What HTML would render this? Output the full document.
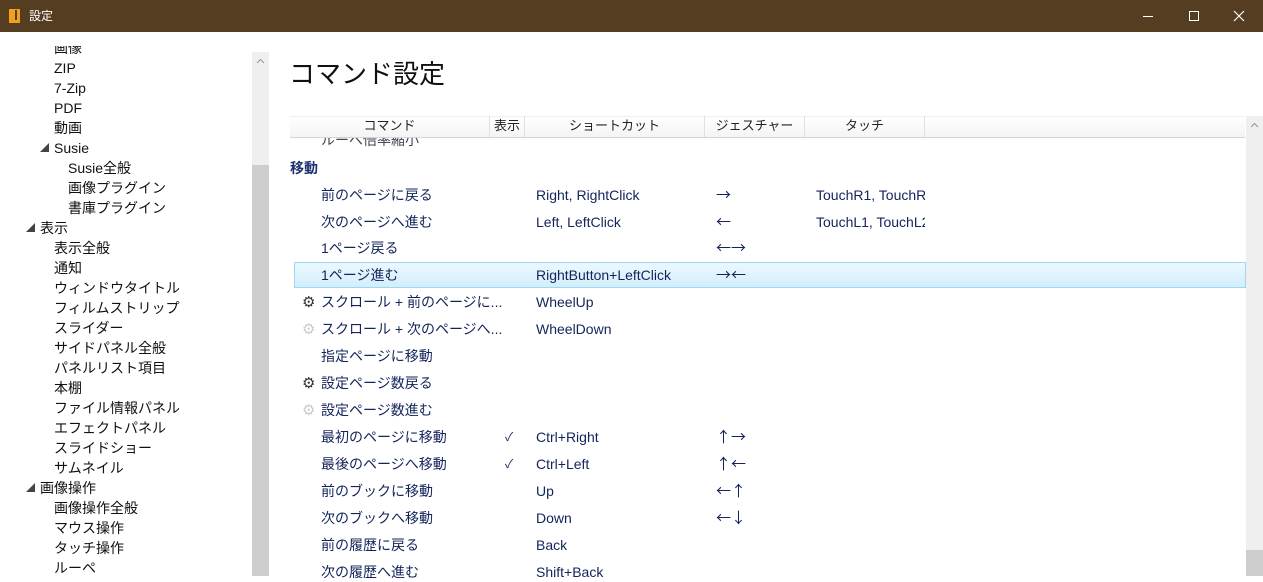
<!DOCTYPE html>
<html><head><meta charset="utf-8"><style>
*{margin:0;padding:0;box-sizing:border-box}
body{width:1263px;height:576px;overflow:hidden;background:#fff;position:relative;font-family:"Liberation Sans","Noto Sans CJK JP",sans-serif;}
.a{position:absolute;white-space:nowrap}
.tb{position:absolute;left:0;top:0;width:1263px;height:32px;background:#553d22;color:#fff}
.t{font-size:14px;line-height:20px;color:#111}
.r{font-size:14px;line-height:20px;color:#13245a}
.ar{font-family:"Noto Sans CJK JP",sans-serif;font-size:15px;line-height:20px;color:#13245a;position:absolute;white-space:nowrap;letter-spacing:0}
.g{font-family:"DejaVu Sans",sans-serif;font-size:15px;line-height:20px;position:absolute}
.h{font-size:13px;line-height:20px;color:#222;text-align:center;position:absolute;top:116px;height:21px;border-right:1px solid #e0e0e0}
</style></head><body>
<div class="tb">
<div class="a" style="left:9px;top:9px;width:11px;height:14px;background:#f0a01c"></div>
<div class="a" style="left:15px;top:10px;width:2px;height:10px;background:#553d22"></div>
<div class="a" style="left:29px;top:7px;font-size:12px;line-height:18px">設定</div>
<div class="a" style="left:1143px;top:16px;width:10px;height:1px;background:#fff"></div>
<div class="a" style="left:1189px;top:11px;width:10px;height:10px;border:1px solid #fff"></div>
<svg class="a" style="left:1233px;top:10px" width="12" height="12"><path d="M1 1L11 11M11 1L1 11" stroke="#fff" stroke-width="1.2"/></svg>
</div>
<!-- left tree -->
<div class="a t" style="left:54px;top:38px;clip-path:inset(8px 0 0 0)">画像</div>
<div class="a t" style="left:54px;top:58px">ZIP</div>
<div class="a t" style="left:54px;top:78px">7-Zip</div>
<div class="a t" style="left:54px;top:98px">PDF</div>
<div class="a t" style="left:54px;top:118px">動画</div>
<div class="a t" style="left:40px;top:138px;font-size:9px;color:#444">◢</div><div class="a t" style="left:54px;top:138px">Susie</div>
<div class="a t" style="left:68px;top:158px">Susie全般</div>
<div class="a t" style="left:68px;top:178px">画像プラグイン</div>
<div class="a t" style="left:68px;top:198px">書庫プラグイン</div>
<div class="a t" style="left:26px;top:218px;font-size:9px;color:#444">◢</div><div class="a t" style="left:40px;top:218px">表示</div>
<div class="a t" style="left:54px;top:238px">表示全般</div>
<div class="a t" style="left:54px;top:258px">通知</div>
<div class="a t" style="left:54px;top:278px">ウィンドウタイトル</div>
<div class="a t" style="left:54px;top:298px">フィルムストリップ</div>
<div class="a t" style="left:54px;top:318px">スライダー</div>
<div class="a t" style="left:54px;top:338px">サイドパネル全般</div>
<div class="a t" style="left:54px;top:358px">パネルリスト項目</div>
<div class="a t" style="left:54px;top:378px">本棚</div>
<div class="a t" style="left:54px;top:398px">ファイル情報パネル</div>
<div class="a t" style="left:54px;top:418px">エフェクトパネル</div>
<div class="a t" style="left:54px;top:438px">スライドショー</div>
<div class="a t" style="left:54px;top:458px">サムネイル</div>
<div class="a t" style="left:26px;top:478px;font-size:9px;color:#444">◢</div><div class="a t" style="left:40px;top:478px">画像操作</div>
<div class="a t" style="left:54px;top:498px">画像操作全般</div>
<div class="a t" style="left:54px;top:518px">マウス操作</div>
<div class="a t" style="left:54px;top:538px">タッチ操作</div>
<div class="a t" style="left:54px;top:558px">ルーペ</div>
<!-- left scrollbar -->
<div class="a" style="left:252px;top:52px;width:17px;height:524px;background:#efefef"></div>
<div class="a" style="left:252px;top:165px;width:17px;height:411px;background:#cdcdcd"></div>
<svg class="a" style="left:256px;top:58px" width="9" height="6"><path d="M1 5L4.5 1.5L8 5" stroke="#999" fill="none"/></svg>
<!-- title -->
<div class="a" style="left:289px;top:56px;font-size:26px;line-height:36px;color:#111">コマンド設定</div>
<!-- header -->
<div class="a" style="left:290px;top:116px;width:955px;height:22px;background:linear-gradient(#fff,#f3f4f4);border-top:1px solid #f0f0f0;border-bottom:1px solid #d5d5d5"></div>
<div class="h" style="left:290px;width:200px">コマンド</div>
<div class="h" style="left:490px;width:35px">表示</div>
<div class="h" style="left:525px;width:180px">ショートカット</div>
<div class="h" style="left:705px;width:100px">ジェスチャー</div>
<div class="h" style="left:805px;width:120px">タッチ</div>
<div class="a r" style="left:321px;top:130px;clip-path:inset(8px 0 0 0);color:#445">ルーペ倍率縮小</div>
<!-- right scrollbar -->
<div class="a" style="left:1246px;top:116px;width:17px;height:460px;background:#efefef"></div>
<div class="a" style="left:1246px;top:550px;width:17px;height:26px;background:#cdcdcd"></div>
<svg class="a" style="left:1250px;top:122px" width="9" height="6"><path d="M1 5L4.5 1.5L8 5" stroke="#999" fill="none"/></svg>
<!-- rows -->
<div class="a" style="left:290px;top:158px;font-size:14px;line-height:20px;font-weight:bold;color:#1c2f6e">移動</div>
<div class="a" style="left:294px;top:262px;width:952px;height:26px;border:1px solid #9ad8f5;background:linear-gradient(#edf8fe,#d3eefc)"></div>

<div class="a r" style="left:321px;top:185px">前のページに戻る</div><div class="a r" style="left:536px;top:185px">Right, RightClick</div><div class="ar" style="left:716px;top:185px">→</div><div class="a r" style="left:816px;top:185px;width:109px;overflow:hidden">TouchR1, TouchR2</div>
<div class="a r" style="left:321px;top:212px">次のページへ進む</div><div class="a r" style="left:536px;top:212px">Left, LeftClick</div><div class="ar" style="left:716px;top:212px">←</div><div class="a r" style="left:816px;top:212px;width:109px;overflow:hidden">TouchL1, TouchL2</div>
<div class="a r" style="left:321px;top:238px">1ページ戻る</div><div class="ar" style="left:716px;top:238px">←→</div>
<div class="a r" style="left:321px;top:265px">1ページ進む</div><div class="a r" style="left:536px;top:265px">RightButton+LeftClick</div><div class="ar" style="left:716px;top:265px">→←</div>
<div class="g" style="left:302px;top:292px;color:#333">⚙</div><div class="a r" style="left:321px;top:292px">スクロール + 前のページに...</div><div class="a r" style="left:536px;top:292px">WheelUp</div>
<div class="g" style="left:302px;top:319px;color:#ccc">⚙</div><div class="a r" style="left:321px;top:319px">スクロール + 次のページへ...</div><div class="a r" style="left:536px;top:319px">WheelDown</div>
<div class="a r" style="left:321px;top:346px">指定ページに移動</div>
<div class="g" style="left:302px;top:373px;color:#333">⚙</div><div class="a r" style="left:321px;top:373px">設定ページ数戻る</div>
<div class="g" style="left:302px;top:400px;color:#ccc">⚙</div><div class="a r" style="left:321px;top:400px">設定ページ数進む</div>
<div class="a r" style="left:321px;top:427px">最初のページに移動</div><div class="a r" style="left:505px;top:427px;font-size:12px">✓</div><div class="a r" style="left:536px;top:427px">Ctrl+Right</div><div class="ar" style="left:716px;top:427px">↑→</div>
<div class="a r" style="left:321px;top:454px">最後のページへ移動</div><div class="a r" style="left:505px;top:454px;font-size:12px">✓</div><div class="a r" style="left:536px;top:454px">Ctrl+Left</div><div class="ar" style="left:716px;top:454px">↑←</div>
<div class="a r" style="left:321px;top:481px">前のブックに移動</div><div class="a r" style="left:536px;top:481px">Up</div><div class="ar" style="left:716px;top:481px">←↑</div>
<div class="a r" style="left:321px;top:508px">次のブックへ移動</div><div class="a r" style="left:536px;top:508px">Down</div><div class="ar" style="left:716px;top:508px">←↓</div>
<div class="a r" style="left:321px;top:535px">前の履歴に戻る</div><div class="a r" style="left:536px;top:535px">Back</div>
<div class="a r" style="left:321px;top:562px">次の履歴へ進む</div><div class="a r" style="left:536px;top:562px">Shift+Back</div>
</body></html>
